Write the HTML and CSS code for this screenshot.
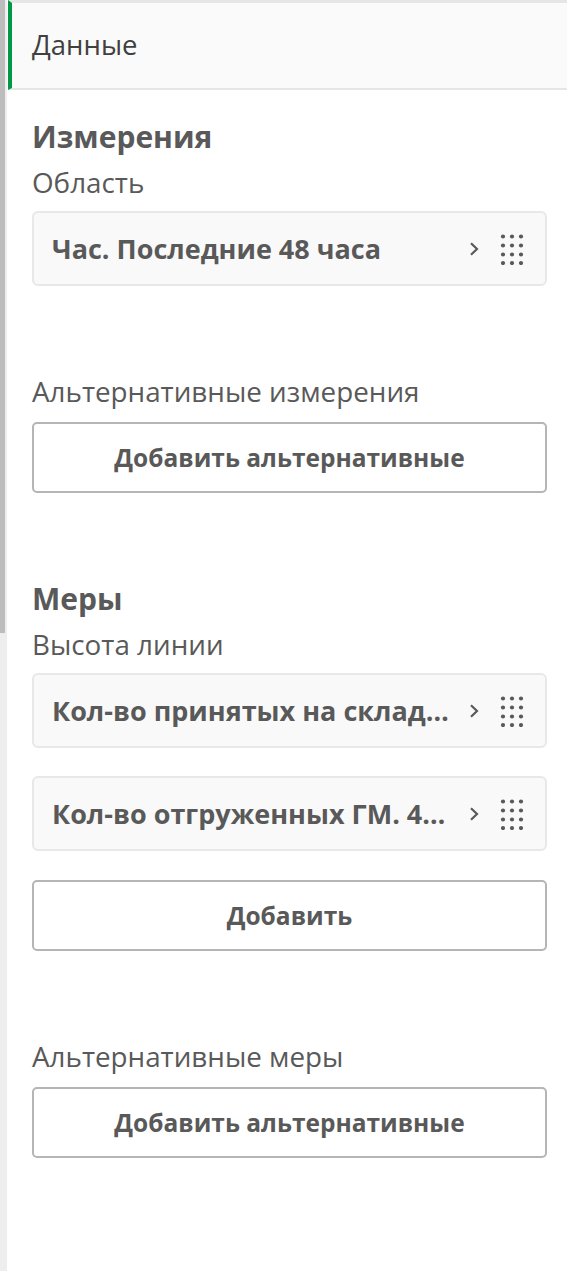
FILE: index.html
```html
<!DOCTYPE html>
<html lang="ru">
<head>
<meta charset="utf-8">
<title>Данные</title>
<link rel="stylesheet" href="styles.css">
</head>
<body>
<div class="layout">
  <div class="track"><div class="thumb"></div></div>
  <div class="panel">
    <div class="tab"><span class="tab-label">Данные</span></div>
    <div class="content">
      <section class="section">
        <h2 class="heading">Измерения</h2>
        <div class="label">Область</div>
        <div class="item">
          <span class="item-text">Час. Последние 48 часа</span>
          <svg class="chev" width="10" height="14" viewBox="0 0 10 14"><path d="M2 1.2 L8 7 L2 12.8" fill="none" stroke="#595959" stroke-width="2.2"/></svg>
          <svg class="dots" width="24" height="32" viewBox="0 0 24 32"><g fill="#595959"><circle cx="3" cy="3.5" r="2.1"/><circle cx="12" cy="3.5" r="2.1"/><circle cx="21" cy="3.5" r="2.1"/><circle cx="3" cy="12.5" r="2.1"/><circle cx="12" cy="12.5" r="2.1"/><circle cx="21" cy="12.5" r="2.1"/><circle cx="3" cy="21.5" r="2.1"/><circle cx="12" cy="21.5" r="2.1"/><circle cx="21" cy="21.5" r="2.1"/><circle cx="3" cy="30" r="2.1"/><circle cx="12" cy="30" r="2.1"/><circle cx="21" cy="30" r="2.1"/></g></svg>
        </div>
        <div class="label label-alt">Альтернативные измерения</div>
        <button class="btn">Добавить альтернативные</button>
      </section>
      <section class="section section-next">
        <h2 class="heading">Меры</h2>
        <div class="label">Высота линии</div>
        <div class="item">
          <span class="item-text">Кол-во принятых на склад…</span>
          <svg class="chev" width="10" height="14" viewBox="0 0 10 14"><path d="M2 1.2 L8 7 L2 12.8" fill="none" stroke="#595959" stroke-width="2.2"/></svg>
          <svg class="dots" width="24" height="32" viewBox="0 0 24 32"><g fill="#595959"><circle cx="3" cy="3.5" r="2.1"/><circle cx="12" cy="3.5" r="2.1"/><circle cx="21" cy="3.5" r="2.1"/><circle cx="3" cy="12.5" r="2.1"/><circle cx="12" cy="12.5" r="2.1"/><circle cx="21" cy="12.5" r="2.1"/><circle cx="3" cy="21.5" r="2.1"/><circle cx="12" cy="21.5" r="2.1"/><circle cx="21" cy="21.5" r="2.1"/><circle cx="3" cy="30" r="2.1"/><circle cx="12" cy="30" r="2.1"/><circle cx="21" cy="30" r="2.1"/></g></svg>
        </div>
        <div class="item item-next">
          <span class="item-text">Кол-во отгруженных ГМ. 4…</span>
          <svg class="chev" width="10" height="14" viewBox="0 0 10 14"><path d="M2 1.2 L8 7 L2 12.8" fill="none" stroke="#595959" stroke-width="2.2"/></svg>
          <svg class="dots" width="24" height="32" viewBox="0 0 24 32"><g fill="#595959"><circle cx="3" cy="3.5" r="2.1"/><circle cx="12" cy="3.5" r="2.1"/><circle cx="21" cy="3.5" r="2.1"/><circle cx="3" cy="12.5" r="2.1"/><circle cx="12" cy="12.5" r="2.1"/><circle cx="21" cy="12.5" r="2.1"/><circle cx="3" cy="21.5" r="2.1"/><circle cx="12" cy="21.5" r="2.1"/><circle cx="21" cy="21.5" r="2.1"/><circle cx="3" cy="30" r="2.1"/><circle cx="12" cy="30" r="2.1"/><circle cx="21" cy="30" r="2.1"/></g></svg>
        </div>
        <button class="btn btn-add">Добавить</button>
        <div class="label label-alt">Альтернативные меры</div>
        <button class="btn">Добавить альтернативные</button>
      </section>
    </div>
  </div>
</div>
</body>
</html>
```
FILE: styles.css
```css
* { box-sizing: border-box; }
html, body { margin: 0; padding: 0; background: #ffffff; }
body {
  font-family: "Open Sans", Roboto, "Liberation Sans", sans-serif;
  color: #595959;
  width: 567px;
  height: 1271px;
  overflow: hidden;
}
.layout {
  display: flex;
  height: 1271px;
}
.track {
  width: 7px;
  flex: 0 0 7px;
  background: #eeeeee;
}
.thumb {
  width: 4.5px;
  height: 633px;
  background: #bdbdbd;
}
.panel {
  flex: 1;
  margin-left: 1px;
  display: flex;
  flex-direction: column;
}
.tab {
  height: 90px;
  border-top: 3px solid #e6e6e6;
  border-bottom: 2px solid #e6e6e6;
  border-left: 4px solid #009845;
  background: #fafafa;
  display: flex;
  align-items: center;
  padding-left: 20px;
}
.tab-label {
  font-size: 27.5px;
  line-height: 32px;
  color: #404040;
  margin-top: -2px;
}
.content {
  padding: 27px 20px 0 24px;
}
.heading {
  margin: 0;
  font-size: 30px;
  line-height: 40px;
  font-weight: 700;
  color: #595959;
}
.label {
  margin-top: 8px;
  font-size: 27.8px;
  line-height: 34px;
}
.label-alt {
  margin-top: 88px;
}
.item {
  margin-top: 12px;
  height: 75px;
  border: 2px solid #e8e8e8;
  border-radius: 6px;
  background: #f9f9f9;
  display: flex;
  align-items: center;
  padding: 0 21px 0 18px;
}
.item-next { margin-top: 28px; }
.item-text {
  flex: 1;
  min-width: 0;
  font-size: 27px;
  line-height: 40px;
  font-weight: 700;
  white-space: nowrap;
}
.chev {
  flex: 0 0 auto;
  margin: 0 21px 0 8px;
}
.dots { flex: 0 0 auto; }
.btn {
  display: block;
  width: 100%;
  margin-top: 14px;
  height: 71px;
  border: 2px solid #b5b5b5;
  border-radius: 5px;
  background: #ffffff;
  font-family: "Open Sans", Roboto, "Liberation Sans", sans-serif;
  font-size: 24.5px;
  font-weight: 700;
  color: #595959;
  padding: 0;
}
.btn-add { margin-top: 29px; }
.section-next { margin-top: 86px; }
```
